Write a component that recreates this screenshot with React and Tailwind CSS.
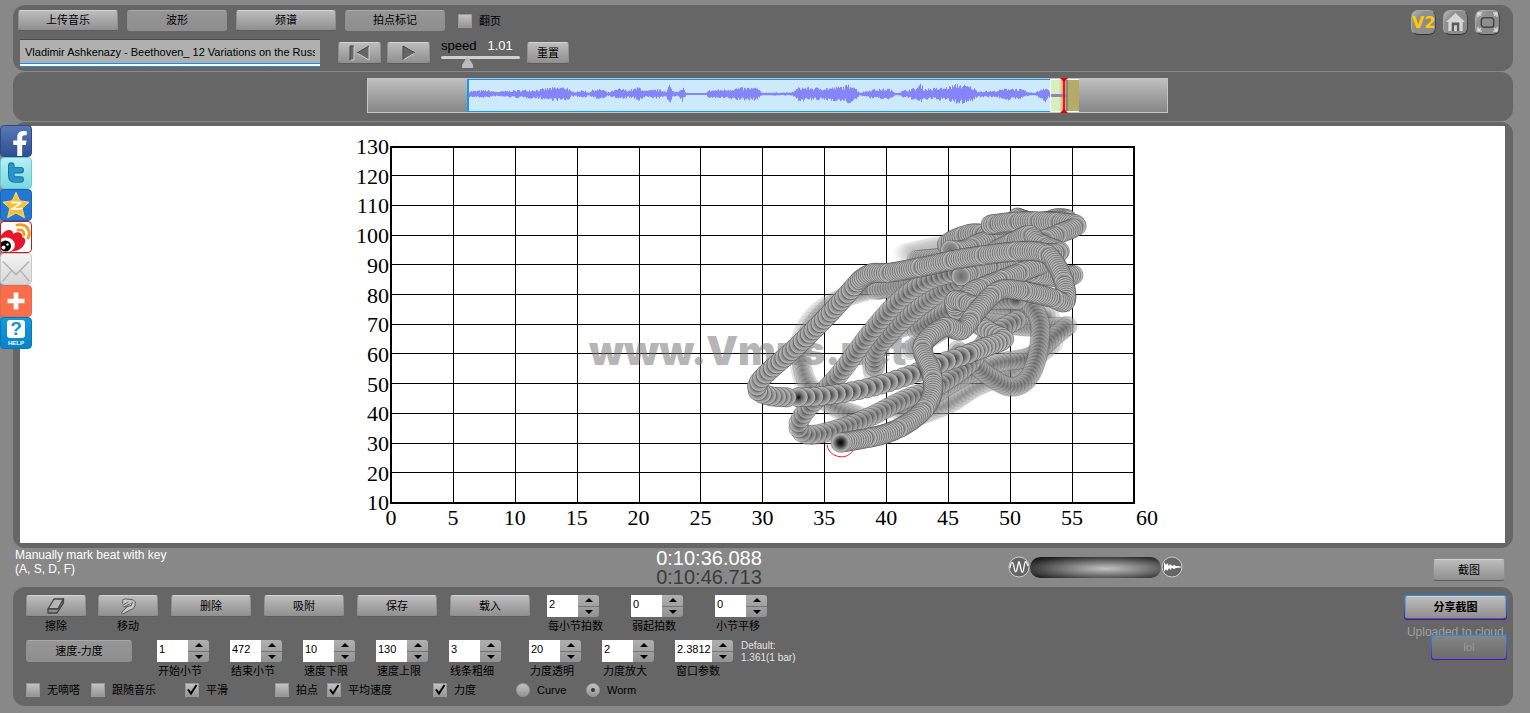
import React from "react";
import { FaFacebookF } from "react-icons/fa";

const FONT = "font-['Liberation_Sans','Noto_Sans_CJK_SC',sans-serif]";
const BTN =
  "flex shrink-0 items-center justify-center rounded-[3px] border border-[#8f8f8f] border-t-[#d2d2d2] border-b-[#5c5c5c] bg-linear-to-b from-[#bdbdbd] to-[#8f8f8f] text-[11px] leading-none text-black";
const DIM =
  "flex shrink-0 items-center justify-center rounded-[3px] border border-[#8f8f8f] border-t-[#a9a9a9] bg-linear-to-b from-[#969696] to-[#8e8e8e] text-[11px] leading-none text-black";

/* ---------- trajectory ---------- */

function spline(points) {
  const out = [];
  for (let i = 0; i < points.length - 1; i++) {
    const a = points[Math.max(0, i - 1)];
    const b = points[i];
    const c = points[i + 1];
    const d = points[Math.min(points.length - 1, i + 2)];
    for (let k = 0; k < 40; k++) {
      const t = k / 40;
      const f = (j) =>
        0.5 *
        (2 * b[j] +
          (c[j] - a[j]) * t +
          (2 * a[j] - 5 * b[j] + 4 * c[j] - d[j]) * t * t +
          (3 * b[j] - a[j] - 3 * c[j] + d[j]) * t * t * t);
      out.push([f(0), f(1)]);
    }
  }
  out.push(points[points.length - 1]);
  return out;
}

function beads(points, step, beat) {
  const line = spline(points);
  const out = [line[0]];
  let acc = 0;
  let run = 0;
  let need = step;
  for (let i = 1; i < line.length; i++) {
    const dx = line[i][0] - line[i - 1][0];
    const dy = line[i][1] - line[i - 1][1];
    const len = Math.hypot(dx, dy);
    let used = 0;
    while (acc + (len - used) >= need) {
      used += need - acc;
      acc = 0;
      const r = used / len;
      out.push([line[i - 1][0] + dx * r, line[i - 1][1] + dy * r]);
      run += need;
      need = step;
      if (beat && run > beat) {
        run = 0;
        need = step + 6;
      }
    }
    acc += len - used;
  }
  return out;
}

const TRAILS = [
  { o: 0.04, step: 4, p: [[520, 192], [570, 180], [640, 165], [720, 150]] },
  { o: 0.14, step: 13, p: [[440, 290], [340, 320], [260, 370], [215, 440], [210, 530], [240, 600], [320, 650], [420, 690]] },
  { o: 0.22, step: 14, p: [[420, 300], [330, 330], [270, 380], [225, 450], [215, 520], [240, 590], [310, 650], [390, 680]] },
  { o: 0.25, step: 13, p: [[560, 680], [660, 640], [740, 590], [860, 540], [970, 460]] },
  { o: 0.3, step: 12, p: [[430, 550], [430, 490], [500, 420], [570, 400], [690, 350], [850, 360], [960, 380]] },
  { o: 0.35, step: 9, p: [[540, 480], [620, 430], [700, 390], [800, 400], [900, 410], [1010, 410]] },
  { o: 0.4, step: 12, p: [[1012, 408], [960, 450], [900, 500], [800, 520], [700, 560], [600, 620], [500, 660]] },
  { o: 0.5, step: 11, p: [[900, 340], [930, 400], [922, 500], [890, 570], [840, 590], [780, 560], [730, 520], [680, 480]] },
  { o: 0.55, step: 12, p: [[560, 420], [640, 370], [700, 340], [780, 330], [870, 330]] },
  { o: 0.5, step: 8, p: [[440, 300], [520, 285], [640, 250], [760, 250], [900, 240]] },
  { o: 0.6, step: 8, p: [[560, 210], [650, 200], [760, 170], [880, 150], [1000, 120]] },
  { o: 0.7, step: 14, p: [[435, 530], [440, 480], [500, 410], [570, 350], [640, 300], [730, 260], [850, 220]] },
  { o: 0.75, step: 16, p: [[860, 390], [780, 440], [720, 520], [620, 590], [520, 630], [420, 680], [330, 715], [240, 735], [205, 710], [230, 660], [330, 550], [420, 430], [510, 330], [600, 270], [720, 240], [900, 220], [980, 230]] },
  { o: 0.85, step: 7, beat: 50, p: [[700, 160], [650, 165], [680, 145], [740, 130], [820, 150], [760, 155], [700, 180], [660, 180]] },
  { o: 0.9, step: 7, beat: 60, p: [[1030, 255], [960, 260], [860, 240], [780, 230], [690, 260]] },
  { o: 0.9, step: 7, beat: 60, p: [[940, 110], [860, 82], [920, 100], [980, 85], [1010, 90], [900, 98], [780, 105], [860, 95], [960, 95], [1040, 105], [990, 130], [940, 150]] },
  { o: 0.9, step: 7, beat: 50, p: [[800, 180], [860, 150], [900, 135], [930, 160], [990, 185], [940, 190]] },
  { o: 0.95, step: 7, beat: 60, p: [[930, 225], [850, 255], [760, 290], [720, 310], [690, 370], [675, 330], [740, 350]] },
  { o: 1, step: 12, soft: true, p: [[740, 400], [790, 430], [822, 448], [770, 470], [722, 488]] },
  { o: 1, step: 23, p: [[715, 492], [640, 517], [540, 555], [430, 590], [320, 612], [250, 620], [190, 622]] },
  { o: 1, step: 15, p: [[170, 622], [120, 618], [82, 600], [100, 560], [200, 470], [300, 370], [385, 275]] },
  { o: 1, step: 7, beat: 90, p: [[390, 270], [425, 250], [480, 248], [580, 230], [700, 205], [850, 185], [925, 185], [965, 205], [1000, 270], [1006, 335], [960, 322], [860, 300], [800, 305], [740, 365], [695, 420], [640, 412], [578, 470], [605, 550], [605, 620], [560, 680], [470, 730], [332, 758]] },
];

const BEADS = TRAILS.map((t) => ({ o: t.o, fill: t.soft || t.step < 10 ? "url(#soft)" : "url(#bead)", list: beads(t.p, t.step, t.beat) }));

function Worm() {
  return (
    <g transform="translate(730 190) scale(0.33333)">
      {BEADS.map((t, i) => (
        <g key={i} fill={t.fill} stroke="#444" strokeWidth="1.7">
          {t.list.map(([x, y], k) => (
            <circle key={k} cx={x.toFixed(1)} cy={y.toFixed(1)} r="29" opacity={t.o} />
          ))}
        </g>
      ))}
      <path d="M291 764A43 43 0 0 0 368 783" fill="none" stroke="#f02030" strokeWidth="3" />
      <circle cx="332" cy="758" r="30" fill="url(#head)" />
    </g>
  );
}

function Chart() {
  const xs = Array.from({ length: 13 }, (_, i) => i * 5);
  const ys = Array.from({ length: 13 }, (_, i) => 130 - i * 10);
  return (
    <svg viewBox="350 126 825 417" className="h-[417px] w-[825px]" role="img" aria-label="Tempo and dynamics">
      <defs>
        <radialGradient id="bead">
          <stop offset="0" stopColor="#050505" />
          <stop offset="0.3" stopColor="#555" />
          <stop offset="0.65" stopColor="#8f8f8f" />
          <stop offset="1" stopColor="#c4c4c4" />
        </radialGradient>
        <radialGradient id="soft">
          <stop offset="0" stopColor="#6c6c6c" />
          <stop offset="0.7" stopColor="#909090" />
          <stop offset="1" stopColor="#d2d2d2" />
        </radialGradient>
        <radialGradient id="head">
          <stop offset="0" stopColor="#000" />
          <stop offset="0.35" stopColor="#333" />
          <stop offset="0.85" stopColor="#b4b4b4" />
          <stop offset="1" stopColor="#888" />
        </radialGradient>
      </defs>
      <g stroke="#000" strokeWidth="1" shapeRendering="crispEdges">
        {xs.map((v, i) => (
          <line key={v} x1={391.4 + i * 61.9} x2={391.4 + i * 61.9} y1="146" y2="503" />
        ))}
        {ys.map((v, i) => (
          <line key={v} x1="391" x2="1134" y1={146 + i * 29.7} y2={146 + i * 29.7} />
        ))}
        <rect x="391" y="146.500" width="743" height="356" fill="none" strokeWidth="2" />
      </g>
      <text x="589" y="365" fontSize="40" fill="#777" fillOpacity="0.55" className="font-['Inter',sans-serif] font-black">
        www.Vmus.net
      </text>
      <g fontSize="22" fill="#000" className="font-['Liberation_Serif',serif]">
        {ys.map((v, i) => (
          <text key={v} x="389" y={154 + i * 29.7} textAnchor="end">{v}</text>
        ))}
        {xs.map((v, i) => (
          <text key={v} x={v === 60 ? 1147 : 391 + i * 61.9} y="525" textAnchor="middle">{v}</text>
        ))}
      </g>
      <Worm />
    </svg>
  );
}

/* ---------- wave form ---------- */

const ENVELOPE = [
  [0, 4], [18, 5], [26, 3], [48, 5], [70, 6], [80, 8], [98, 9], [102, 3], [115, 5], [119, 2], [124, 6], [134, 6], [138, 2], [150, 7], [160, 5], [170, 9],
  [176, 4], [188, 6], [197, 4], [200, 13], [203, 4], [208, 3], [213, 10], [217, 1], [235, 1], [240, 5], [255, 6], [270, 8], [288, 8], [292, 2], [322, 2],
  [330, 9], [345, 8], [360, 8], [375, 10], [383, 13], [388, 5], [391, 2], [402, 6], [420, 7], [427, 1], [435, 5], [447, 8], [451, 13], [455, 7],
  [475, 8], [489, 13], [503, 9], [508, 4], [525, 4], [540, 8], [552, 6], [560, 2], [566, 2], [576, 10], [581, 3],
];

function wavePath() {
  let d = "";
  let seed = 7;
  const rnd = () => {
    seed = (seed * 16807) % 2147483647;
    return seed / 2147483647;
  };
  for (let x = 0; x < 581; x++) {
    let k = 0;
    while (k < ENVELOPE.length - 2 && ENVELOPE[k + 1][0] < x) k++;
    const [x0, a0] = ENVELOPE[k];
    const [x1, a1] = ENVELOPE[k + 1];
    const a = (a0 + ((a1 - a0) * (x - x0)) / (x1 - x0)) * 0.85;
    const up = Math.max(1, a * (0.5 + rnd() * 0.5));
    const dn = Math.max(1, a * (0.5 + rnd() * 0.5));
    d += `M${x + 0.5} ${(14 - up).toFixed(1)}V${(14 + dn).toFixed(1)}`;
  }
  return d;
}
const WAVE = wavePath();

function Overview() {
  return (
    <div className="relative flex h-[35px] w-[801px] border border-[#c4c4c4] bg-linear-to-b from-[#c0c0c0] to-[#868686]">
      <div className="w-[99px]" />
      <div className="w-[583px] border-y border-l-2 border-[#1b97ee] bg-[#cdeafc]">
        <svg viewBox="0 0 581 31" className="h-[31px] w-[581px]">
          <path d={WAVE} stroke="#8585fa" strokeWidth="1" fill="none" />
        </svg>
      </div>
      <div className="flex w-[29px] border-y border-l border-white bg-[#b3ab66]">
        <div className="flex w-[17px] items-center border-r-2 border-[#6b8f8c] bg-linear-to-r from-[#d3f0bd] from-50% to-[#e8a08c]">
          <div className="h-[3px] w-full bg-[#8f86b0]" />
        </div>
      </div>
      <svg viewBox="0 0 12 35" className="absolute -top-px left-[690px] h-[35px] w-[12px]">
        <path d="M6 0V35" stroke="#f07060" strokeWidth="5" opacity="0.4" />
        <path d="M6 0V35" stroke="#d50000" strokeWidth="1.6" />
        <path d="M2 0H10L6 4ZM2 35H10L6 31Z" fill="#e00000" />
      </svg>
    </div>
  );
}

/* ---------- controls ---------- */

function Stepper({ id, label, value, wide }) {
  return (
    <div className={`flex ${wide ? "w-[58px]" : "w-[52px]"} shrink-0 flex-col gap-[2px]`}>
      <div className="flex h-[22px]">
        <input id={id} defaultValue={value} className="min-w-0 flex-1 bg-white pb-1 pl-[2px] text-[11px] leading-none text-black outline-none" />
        <div className="flex w-[21px] flex-col overflow-hidden rounded-r-[3px] bg-linear-to-b from-[#b0b0b0] to-[#929292]">
          <button aria-label={`${label} +`} className="flex flex-1 items-center justify-center border-b border-[#757575]">
            <svg viewBox="0 0 8 4" className="h-[4px] w-[8px]"><path d="M0 4L4 0L8 4Z" /></svg>
          </button>
          <button aria-label={`${label} -`} className="flex flex-1 items-center justify-center">
            <svg viewBox="0 0 8 4" className="h-[4px] w-[8px]"><path d="M0 0L4 4L8 0Z" /></svg>
          </button>
        </div>
      </div>
      <label htmlFor={id} className="pl-px text-[11px] leading-[14px] whitespace-nowrap text-black">{label}</label>
    </div>
  );
}

function Check({ label, checked, className }) {
  return (
    <label className={`flex shrink-0 items-center gap-[7px] text-[11px] leading-[14px] text-black ${className}`}>
      <span className="relative flex size-[14px]">
        <input type="checkbox" defaultChecked={checked} className="peer size-[14px] appearance-none border border-[#999] bg-linear-to-b from-[#c2c2c2] to-[#959595]" />
        <svg viewBox="0 0 14 14" className="pointer-events-none absolute inset-0 hidden size-[14px] peer-checked:block">
          <path d="M3 6.5L6 10.5L11.5 2" fill="none" stroke="#000" strokeWidth="2" />
        </svg>
      </span>
      {label}
    </label>
  );
}

function Radio({ label, checked, className }) {
  return (
    <label className={`flex shrink-0 items-center gap-[7px] text-[11px] leading-[14px] text-black ${className}`}>
      <span className="relative flex size-[14px]">
        <input type="radio" name="shape" defaultChecked={checked} className="peer size-[14px] appearance-none rounded-full border border-[#999] bg-linear-to-b from-[#c2c2c2] to-[#959595]" />
        <span className="pointer-events-none absolute top-[5px] left-[5px] hidden size-[4px] rounded-full bg-[#333] peer-checked:block" />
      </span>
      {label}
    </label>
  );
}

function CornerButton({ label, children }) {
  return (
    <button aria-label={label} className="flex size-[25px] items-center justify-center rounded-[7px] border border-[#a8a8a8] border-r-[#444] border-b-[#333] bg-linear-to-br from-[#b5b5b5] via-[#8f8f8f] via-30% to-[#8a8a8a]">
      {children}
    </button>
  );
}

function Social({ label, className, children }) {
  return (
    <a href="#" aria-label={label} className={`flex size-[32px] items-center justify-center overflow-hidden rounded-[4px] border ${className}`}>
      {children}
    </a>
  );
}

function SocialBar() {
  return (
    <nav className="absolute top-[125px] left-0 flex flex-col">
      <Social label="Facebook" className="items-end border-[#2c4a86] bg-linear-to-b from-[#5a77b5] to-[#2f4f8f]">
        <FaFacebookF className="mt-[5px] ml-[8px] size-[25px] text-white" />
      </Social>
      <Social label="Twitter" className="border-[#6cc9d2] bg-linear-to-b from-[#b4f0f2] to-[#7ad9e0]">
        <svg viewBox="0 0 32 32" className="size-[30px]" fill="none" strokeLinecap="round" strokeLinejoin="round">
          <path d="M11 8V19Q11 23 15 23H21M11 13H21" stroke="#1c6f9c" strokeWidth="7" />
          <path d="M11 8V19Q11 23 15 23H21M11 13H21" stroke="#2795c9" strokeWidth="5" />
        </svg>
      </Social>
      <Social label="Qzone" className="border-[#1a61b8] bg-[#2477d2]">
        <svg viewBox="0 0 32 32" className="size-[30px]">
          <path d="M16 2.500L20 11.500L30 13L22.500 19.500L25 29.500L16 24.500L7 29.500L9.500 19.500L2 13L12 11.500Z" fill="#fdbf2a" stroke="#f5e37c" strokeWidth="1" />
          <path d="M10.500 13.500Q16 12.500 21 14L12 20Q18 21 23 19.500" fill="none" stroke="#fff" strokeWidth="1.800" />
        </svg>
      </Social>
      <Social label="Weibo" className="border-[#c81818] bg-white">
        <svg viewBox="0 0 32 32" className="size-[32px] shrink-0">
          <path d="M0 16C4 9 9 8 12 10C13 11 13 12 13 13C17 10 23 11 22 16C26 17 26 21 24 24C21 29 14 31 8 31H0Z" fill="#e6162d" />
          <ellipse cx="6" cy="24" rx="9" ry="7.500" fill="#fff" />
          <circle cx="5.500" cy="25" r="5.500" fill="#000" />
          <circle cx="3.500" cy="26.500" r="2" fill="#fff" />
          <circle cx="7.500" cy="23.500" r="1.200" fill="#fff" />
          <path d="M17 4Q27 2 29 11Q29.500 14 28 17M18 9Q24 8 24 14" fill="none" stroke="#f59a1b" strokeWidth="2.800" strokeLinecap="round" />
        </svg>
      </Social>
      <Social label="Email" className="border-[#c8c8c8] bg-linear-to-b from-[#f4f4f4] to-[#d6d6d6]">
        <svg viewBox="0 0 32 32" className="size-[30px]">
          <path d="M2 8L16 22L30 8M2 29L11 18M30 29L21 18" fill="none" stroke="#b5b5b5" strokeWidth="1.600" />
        </svg>
      </Social>
      <Social label="More" className="border-[#e8694a] bg-[#fb6e4c]">
        <svg viewBox="0 0 32 32" className="size-[30px]"><path d="M16 7V25M7 16H25" stroke="#fff" strokeWidth="5" /></svg>
      </Social>
      <Social label="Help" className="flex-col border-[#0677b5] bg-linear-to-b from-[#109bdc] to-[#0a83c8]">
        <span className="flex h-[18px] w-[18px] items-center justify-center rounded-[3px] bg-white text-[19px] leading-none font-bold text-[#0f94d4]">?</span>
        <span className="mt-px text-[6px] leading-[8px] font-bold text-white">HELP</span>
      </Social>
    </nav>
  );
}

const PANEL = "rounded-[12px] bg-[#666]";

export default function App() {
  return (
    <div className={`relative min-h-screen bg-[#888] pt-[5px] pr-[17px] pb-[7px] pl-[13px] ${FONT}`}>
      <header className={`${PANEL} flex h-[66px] justify-between pr-[13px]`}>
        <div className="flex flex-col">
          <div className="mt-[5px] ml-[5px] flex h-[21px] gap-[9px]">
            <button className={`${BTN} w-[100px]`}>上传音乐</button>
            <button className={`${DIM} w-[100px]`}>波形</button>
            <button className={`${BTN} w-[100px]`}>频谱</button>
            <button className={`${DIM} w-[100px]`}>拍点标记</button>
            <Check label="翻页" className="ml-[4px]" />
          </div>
          <div className="mt-[8px] ml-[7px] flex h-[28px] items-center">
            <input
              aria-label="Track"
              readOnly
              value="Vladimir Ashkenazy - Beethoven_ 12 Variations on the Russian Dance"
              className="mb-[4px] h-[24px] w-[300px] border-t border-t-[#484848] bg-[#b0b0b0] px-[5px] text-[11px] text-black shadow-[0_1px_0_#0f93ee,0_3px_0_#fff,0_4px_0_#0f93ee] outline-none"
            />
            <button aria-label="Back to start" className={`${BTN} ml-[18px] h-[22px] w-[43px]`}>
              <svg viewBox="0 0 22 16" className="h-[16px] w-[22px]">
                <path d="M1 1H5V15H1ZM20 1V15L8 8Z" fill="#666" />
                <path d="M5 1V15H2M20 1V15L8 8" fill="none" stroke="#d0d0d0" />
                <path d="M1 15V1H5M8 8L20 1" fill="none" stroke="#444" />
              </svg>
            </button>
            <button aria-label="Play" className={`${BTN} ml-[6px] h-[22px] w-[43px]`}>
              <svg viewBox="0 0 14 16" className="h-[16px] w-[14px]">
                <path d="M1 1V15L13 8Z" fill="#666" />
                <path d="M1 15L13 8" fill="none" stroke="#d0d0d0" />
                <path d="M1 15V1L13 8" fill="none" stroke="#444" />
              </svg>
            </button>
            <div className="mb-[5px] ml-[11px] flex w-[79px] flex-col">
              <div className="flex gap-[11px] text-[13px] leading-[14px]">
                <label htmlFor="speed" className="text-black">speed</label>
                <span className="text-white">1.01</span>
              </div>
              <input
                id="speed"
                type="range"
                min="0"
                max="100"
                defaultValue="31"
                className="h-[9px] w-full appearance-none bg-transparent [&::-webkit-slider-runnable-track]:h-[3px] [&::-webkit-slider-runnable-track]:rounded-full [&::-webkit-slider-runnable-track]:bg-[#d0d0d0] [&::-webkit-slider-thumb]:h-[12px] [&::-webkit-slider-thumb]:w-[11px] [&::-webkit-slider-thumb]:appearance-none [&::-webkit-slider-thumb]:bg-[#bcbcbc] [&::-webkit-slider-thumb]:[clip-path:polygon(50%_0,100%_75%,100%_100%,0_100%,0_75%)]"
              />
            </div>
            <button className={`${BTN} ml-[7px] h-[22px] w-[42px]`}>重置</button>
          </div>
        </div>
        <div className="mt-[5px] flex gap-[7px]">
          <CornerButton label="Version 2">
            <span className="text-[16px] leading-none font-bold text-[#ffc800] font-['DejaVu_Sans',sans-serif]">V2</span>
          </CornerButton>
          <CornerButton label="Home">
            <svg viewBox="0 0 22 22" className="size-[21px] shrink-0">
              <path d="M11 1L21 10.500H18.500V20H3.500V10.500H1Z" fill="#d6d6d6" />
              <path d="M7 20V11H15V20H12.500V14H9.500V20Z" fill="#5c5c5c" />
            </svg>
          </CornerButton>
          <CornerButton label="Full screen">
            <svg viewBox="0 0 22 22" className="size-[21px] shrink-0" fill="none">
              <rect x="4.500" y="6" width="13" height="10" rx="3" stroke="#444" strokeWidth="1.500" />
              <path d="M1 5V1H5M1 1L4 4M17 1H21V5M21 1L18 4M1 16V20H5M1 20L4 17M17 20H21V16M21 20L18 17" stroke="#ddd" strokeWidth="1.500" />
            </svg>
          </CornerButton>
        </div>
      </header>

      <section className={`${PANEL} mt-px flex h-[49px] justify-center pt-[6px] pl-[9px]`}>
        <Overview />
      </section>

      <main className={`${PANEL} mt-px pt-[4px] pr-[8px] pb-[5px] pl-[7px]`}>
        <div className="flex justify-center bg-white">
          <Chart />
        </div>
      </main>

      <section className="grid h-[39px] grid-cols-3 items-start">
        <p className="pl-[2px] text-[12px] leading-[14px] text-white">
          Manually mark beat with key
          <br />
          (A, S, D, F)
        </p>
        <div className="flex flex-col items-center pt-px pr-[108px] text-[20px] leading-[19px]">
          <span className="text-white">0:10:36.088</span>
          <span className="text-[#3c3c3c]">0:10:46.713</span>
        </div>
        <div className="flex justify-between pr-[8px]">
          <div className="-ml-[5px] flex items-center pt-[5px]">
            <svg viewBox="0 0 22 22" className="size-[22px]">
              <circle cx="11" cy="11" r="10" fill="#666" stroke="#ccc" />
              <path d="M2 12C3 5 5 5 6 11S8 18 9.500 11S11 4 12.500 11S15 18 16 11S18 4 20 10" fill="none" stroke="#fff" strokeWidth="1.300" />
            </svg>
            <div className="h-[21px] w-[131px] rounded-full bg-[radial-gradient(ellipse_at_58%_55%,#c4c4c4,#777_40%,#1c1c1c_85%)]" />
            <svg viewBox="0 0 22 22" className="size-[22px]">
              <circle cx="11" cy="11" r="10" fill="#666" stroke="#ccc" />
              <path d="M3 6V16L5 13L6 15L8 12L9 14L11 12L13 13L15 12L20 11.500V10.500L15 10L13 9L11 10L9 8L8 10L6 7L5 9Z" fill="#fff" />
            </svg>
          </div>
          <button className={`${BTN} mt-[11px] h-[22px] w-[72px]`}>截图</button>
        </div>
      </section>

      <footer className={`${PANEL} flex h-[119px] justify-between pt-[8px] pr-[6px] pl-[13px]`}>
        <div className="flex flex-col">
          <div className="flex h-[45px] items-start">
            <div className="flex w-[60px] flex-col items-center gap-[2px]">
              <button id="erase" aria-label="擦除" className={`${BTN} h-[22px] w-[60px]`}>
                <svg viewBox="0 0 18 16" className="h-[16px] w-[18px]" stroke="#444" strokeWidth="1.300" strokeLinejoin="round">
                  <path d="M1 11L7 1H16.500L11 11Z" fill="#b4b4b4" />
                  <path d="M1 11V15H10L16.500 5V1L11 11Z" fill="#8c8c8c" />
                </svg>
              </button>
              <label htmlFor="erase" className="text-[11px] leading-[14px] text-black">擦除</label>
            </div>
            <div className="ml-[12px] flex w-[60px] flex-col items-center gap-[2px]">
              <button id="move" aria-label="移动" className={`${BTN} h-[22px] w-[60px]`}>
                <svg viewBox="0 0 18 18" className="size-[17px]" fill="#c8c8c8" stroke="#555" strokeLinejoin="round">
                  <path d="M3 4Q2 1 6 1L14 2Q17 3 16 8Q15 12 10 13L3 17Q1 17 2 15L8 9Q6 10 4 9Q2 8 4 7Q2 6 3 4Z" />
                  <path d="M4 7L9 4M5 9L11 6M8 9L12 8L13 4" fill="none" />
                </svg>
              </button>
              <label htmlFor="move" className="text-[11px] leading-[14px] text-black">移动</label>
            </div>
            <div className="ml-[13px] flex gap-[13px]">
              <button className={`${BTN} h-[22px] w-[80px]`}>删除</button>
              <button className={`${BTN} h-[22px] w-[80px]`}>吸附</button>
              <button className={`${BTN} h-[22px] w-[80px]`}>保存</button>
              <button className={`${BTN} h-[22px] w-[80px]`}>载入</button>
            </div>
            <div className="ml-[17px] flex gap-[32px]">
              <Stepper id="beats" label="每小节拍数" value="2" />
              <Stepper id="pickup" label="弱起拍数" value="0" />
              <Stepper id="shift" label="小节平移" value="0" />
            </div>
          </div>
          <div className="flex h-[43px] items-start">
            <button className={`${DIM} h-[22px] w-[106px]`}>速度-力度</button>
            <div className="ml-[25px] flex gap-[21px]">
              <Stepper id="from" label="开始小节" value="1" />
              <Stepper id="to" label="结束小节" value="472" />
              <Stepper id="tmin" label="速度下限" value="10" />
              <Stepper id="tmax" label="速度上限" value="130" />
              <Stepper id="thick" label="线条粗细" value="3" />
            </div>
            <div className="ml-[28px] flex gap-[21px]">
              <Stepper id="alpha" label="力度透明" value="20" />
              <Stepper id="zoom" label="力度放大" value="2" />
              <Stepper id="win" label="窗口参数" value="2.3812" wide />
            </div>
            <p className="ml-[8px] text-[10px] leading-[12px] text-[#e4e4e4]">
              Default:
              <br />
              1.361(1 bar)
            </p>
          </div>
          <div className="flex">
            <Check label="无嘀嗒" className="w-[65px]" />
            <Check label="跟随音乐" className="w-[94px]" />
            <Check label="平滑" checked className="w-[90px]" />
            <Check label="拍点" className="w-[52px]" />
            <Check label="平均速度" checked className="w-[106px]" />
            <Check label="力度" checked className="w-[83px]" />
            <Radio label="Curve" className="w-[70px]" />
            <Radio label="Worm" checked className="w-[70px]" />
          </div>
        </div>
        <div className="flex flex-col items-end">
          <div className="rounded-[3px] bg-linear-to-b from-[#1c90ff] to-[#3a10c8] p-px">
            <button className={`${BTN} h-[23px] w-[101px] font-bold`}>分享截图</button>
          </div>
          <p className="mt-[5px] text-[12px] leading-[14px] text-[#a0a0a0]">Uploaded to cloud.</p>
          <div className="-mt-[4px] rounded-[3px] bg-linear-to-b from-[#1c90ff] to-[#3a10c8] p-px">
            <button className="flex h-[23px] w-[74px] items-center justify-center rounded-[3px] bg-linear-to-b from-[#858585] to-[#6c6c6c] text-[11px] text-[#9a9a9a]">lol</button>
          </div>
        </div>
      </footer>

      <SocialBar />
    </div>
  );
}
